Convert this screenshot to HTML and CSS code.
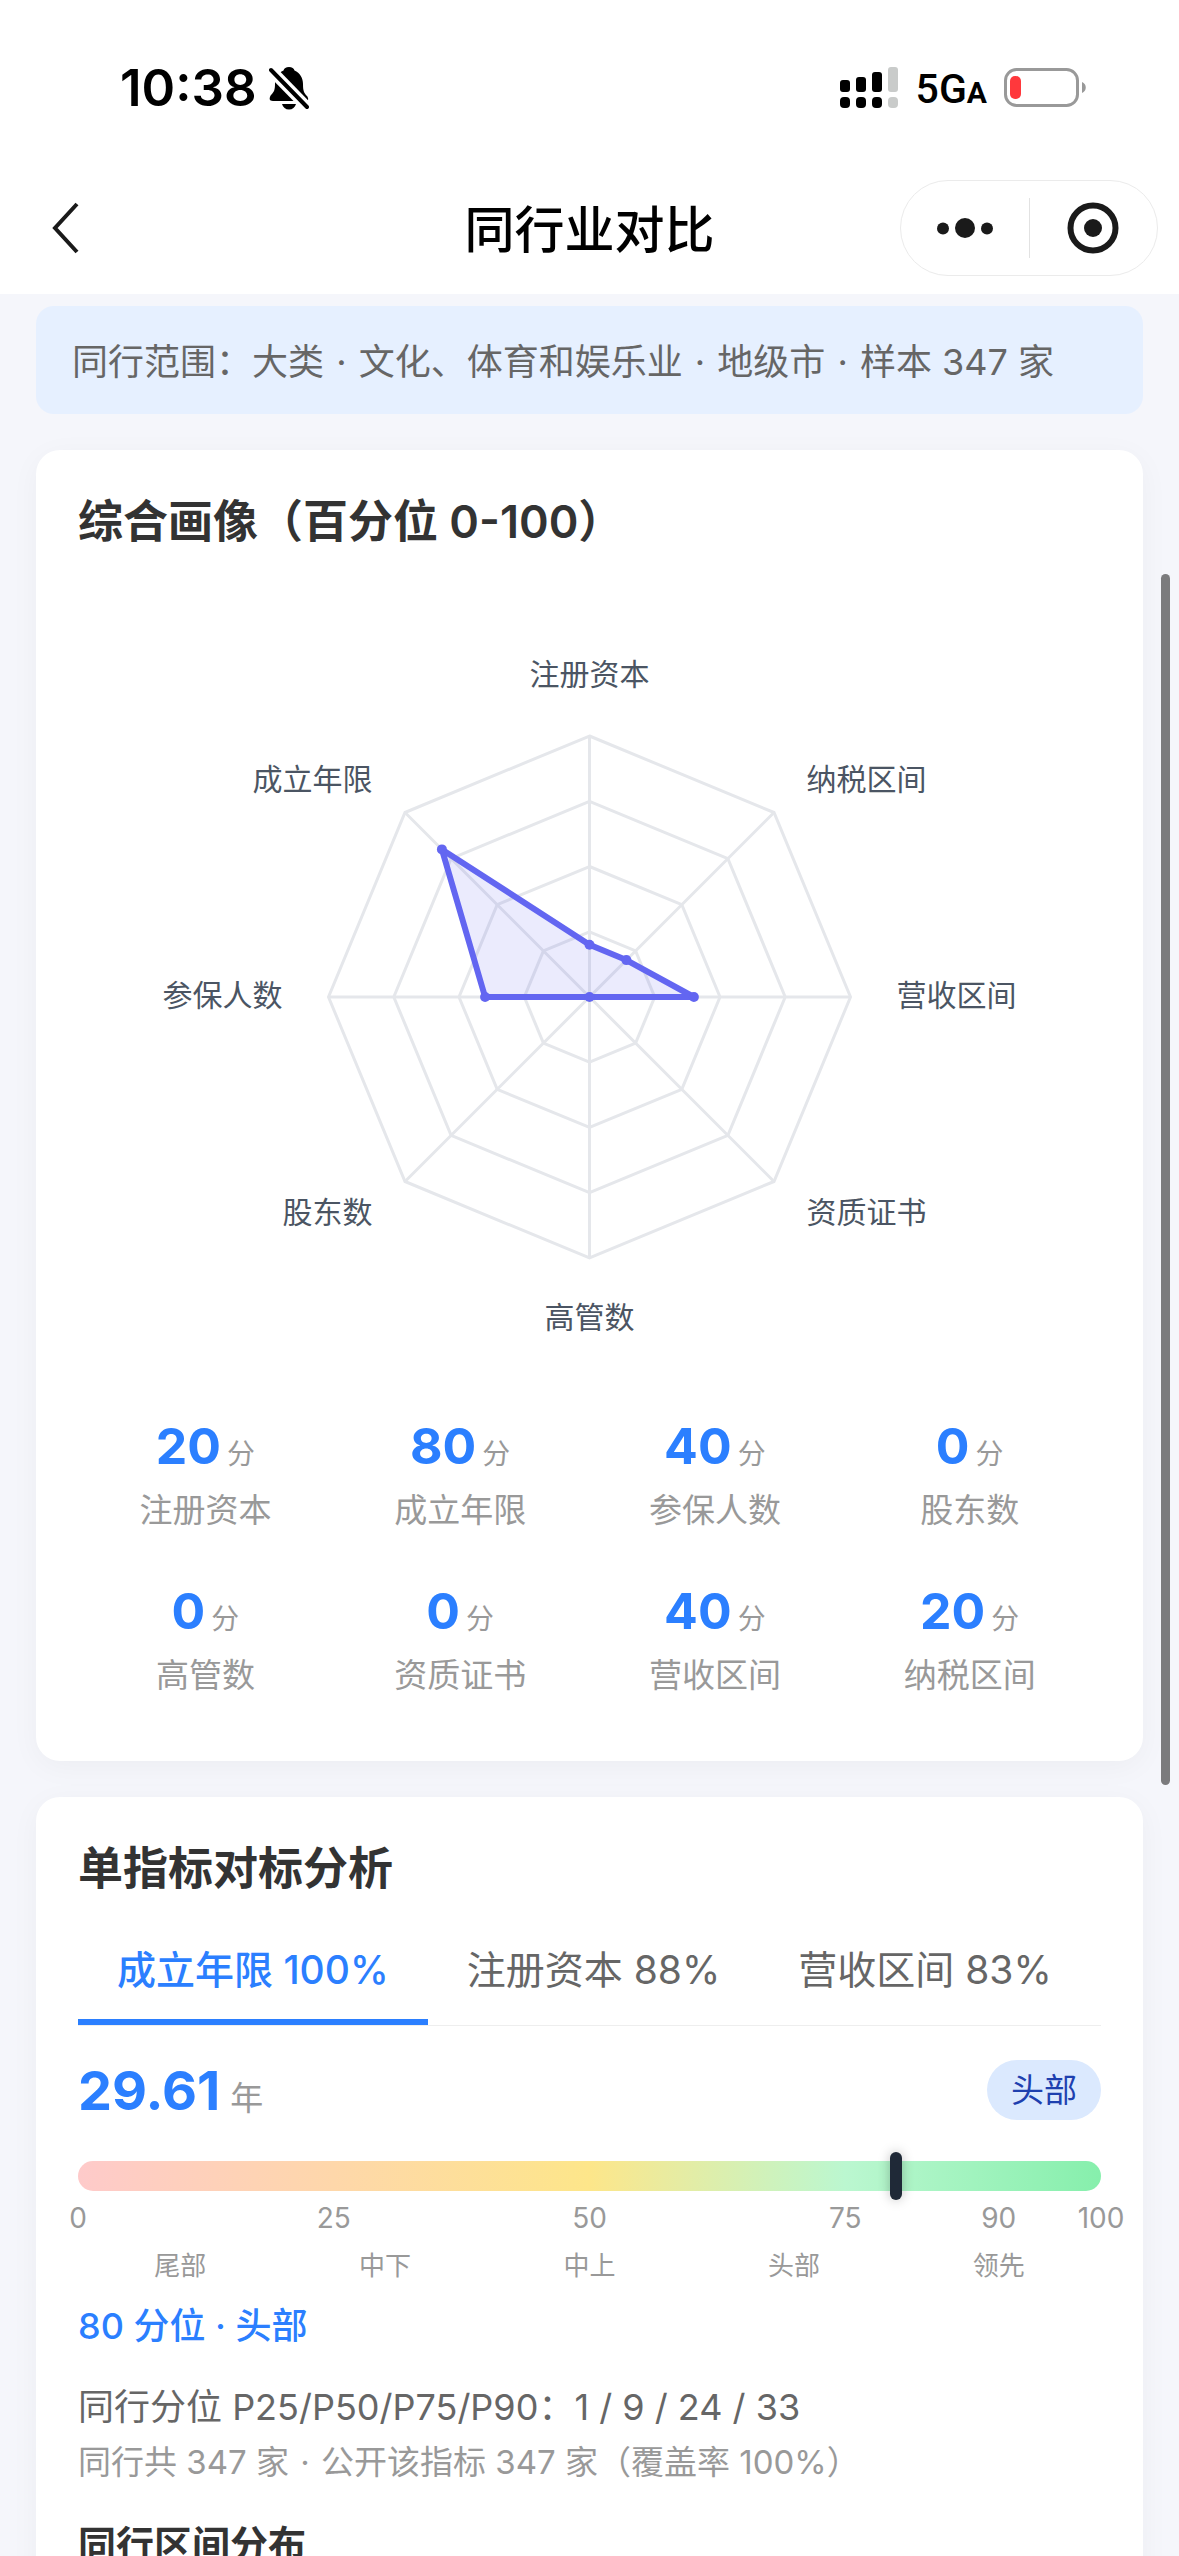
FILE: index.html
```html
<!DOCTYPE html>
<html lang="zh-CN">
<head>
<meta charset="utf-8">
<meta name="viewport" content="width=device-width, initial-scale=1">
<title>同行业对比</title>
<link rel="stylesheet" href="styles.css">
</head>
<body>
<div class="app">
  <header class="header">
    <div class="status">
      <div class="status-side">
        <span class="clock">10:38</span>
        <svg class="bell" width="40" height="44" viewBox="0 0 40 44" aria-label="静音">
          <path d="M20 1c3 0 5 1.500 5.500 3.500C31 7 34 12 34 18c0 7 1 9 4 12 1.500 2 2 5-1 5H4c-4 0-4-3-2-6 3-3 4-5 4-11C6 12 9 7 14.500 4.500 15 2.500 17 1 20 1z"/>
          <path d="M13 38h14c-1 3.500-3.500 5.500-7 5.500S14 41.500 13 38z"/>
          <path class="bell-gap" d="M-1 1l41 42"/>
          <path class="bell-slash" d="M2 4l36 37"/>
        </svg>
      </div>
      <div class="status-side">
        <svg width="58" height="42" viewBox="0 0 58 42" aria-label="信号">
          <rect x="0" y="13" width="10" height="12" rx="3"/><rect x="16" y="10" width="10" height="15" rx="3"/><rect x="32" y="5" width="10" height="20" rx="3"/>
          <rect x="0" y="30" width="10" height="11" rx="4"/><rect x="16" y="30" width="10" height="11" rx="4"/><rect x="32" y="30" width="10" height="11" rx="4"/>
          <g fill="#c9cbca"><rect x="48" y="0" width="10" height="25" rx="3"/><rect x="48" y="30" width="10" height="11" rx="4"/></g>
        </svg>
        <span class="network">5G<span class="network-suffix">A</span></span>
        <svg width="83" height="40" viewBox="0 0 83 40" aria-label="电量低">
          <rect x="1.500" y="1.500" width="72" height="36" rx="11" fill="none" stroke="#999" stroke-width="3"/>
          <rect x="6" y="8" width="11" height="23" rx="5" fill="#ff383c"/>
          <path d="M78 14c5 2 5 9 0 11z" fill="#999"/>
        </svg>
      </div>
    </div>
    <nav class="nav">
      <button class="back" type="button" aria-label="返回">
        <svg width="28" height="52" viewBox="0 0 28 52"><path d="M25 2L3 26l22 24" fill="none" stroke="#1a1a1a" stroke-width="4"/></svg>
      </button>
      <h1 class="nav-title">同行业对比</h1>
      <div class="capsule">
        <button class="capsule-btn" type="button" aria-label="更多">
          <svg width="56" height="20" viewBox="0 0 56 20"><circle cx="6" cy="10.500" r="6"/><circle cx="28" cy="10" r="10"/><circle cx="50" cy="10.500" r="6"/></svg>
        </button>
        <span class="capsule-line"></span>
        <button class="capsule-btn" type="button" aria-label="关闭">
          <svg width="52" height="52" viewBox="0 0 52 52"><circle cx="26" cy="26" r="22.500" fill="none" stroke="#1a1a1a" stroke-width="6"/><circle cx="26" cy="26" r="9"/></svg>
        </button>
      </div>
    </nav>
  </header>

  <main class="content">
    <p class="scope">同行范围：大类 <span class="sep">·</span> 文化、体育和娱乐业 <span class="sep">·</span> 地级市 <span class="sep">·</span> 样本 347 家</p>

    <section class="card">
      <h2 class="card-title">综合画像（百分位 0-100）</h2>
      <svg class="radar" viewBox="0 0 1023 804" role="img" aria-label="综合画像雷达图">
        <g transform="translate(511.5 400)">
          <g class="radar-grid">
            <polygon points="0,-261 184.500,-184.500 261,0 184.500,184.500 0,261 -184.500,184.500 -261,0 -184.500,-184.500"/>
            <polygon points="0,-195.700 138.400,-138.400 195.700,0 138.400,138.400 0,195.700 -138.400,138.400 -195.700,0 -138.400,-138.400"/>
            <polygon points="0,-130.500 92.300,-92.300 130.500,0 92.300,92.300 0,130.500 -92.300,92.300 -130.500,0 -92.300,-92.300"/>
            <polygon points="0,-65.200 46.100,-46.100 65.200,0 46.100,46.100 0,65.200 -46.100,46.100 -65.200,0 -46.100,-46.100"/>
            <path d="M0-261V261M-261 0H261M-184.500-184.500L184.500 184.500M184.500-184.500L-184.500 184.500"/>
          </g>
          <polygon class="radar-area" points="0,-52.200 36.900,-36.900 104.400,0 0,0 -104.400,0 -147.600,-147.600"/>
          <g class="radar-dots">
            <circle cy="-52.200" r="5"/><circle cx="36.900" cy="-36.900" r="5"/><circle cx="104.400" r="5"/><circle r="5"/><circle cx="-104.400" r="5"/><circle cx="-147.600" cy="-147.600" r="5"/>
          </g>
          <g class="radar-labels">
            <text y="-312" text-anchor="middle">注册资本</text>
            <text x="217" y="-207">纳税区间</text>
            <text x="307" y="9">营收区间</text>
            <text x="217" y="226">资质证书</text>
            <text y="331" text-anchor="middle">高管数</text>
            <text x="-217" y="226" text-anchor="end">股东数</text>
            <text x="-307" y="9" text-anchor="end">参保人数</text>
            <text x="-217" y="-207" text-anchor="end">成立年限</text>
          </g>
        </g>
      </svg>
      <dl class="scores">
        <div class="score"><dd class="score-value">20<small>分</small></dd><dt>注册资本</dt></div>
        <div class="score"><dd class="score-value">80<small>分</small></dd><dt>成立年限</dt></div>
        <div class="score"><dd class="score-value">40<small>分</small></dd><dt>参保人数</dt></div>
        <div class="score"><dd class="score-value">0<small>分</small></dd><dt>股东数</dt></div>
        <div class="score"><dd class="score-value">0<small>分</small></dd><dt>高管数</dt></div>
        <div class="score"><dd class="score-value">0<small>分</small></dd><dt>资质证书</dt></div>
        <div class="score"><dd class="score-value">40<small>分</small></dd><dt>营收区间</dt></div>
        <div class="score"><dd class="score-value">20<small>分</small></dd><dt>纳税区间</dt></div>
      </dl>
    </section>

    <section class="card">
      <h2 class="card-title">单指标对标分析</h2>
      <div class="tabs" role="tablist">
        <button class="tab tab-active" type="button" role="tab" aria-selected="true">成立年限 100%</button>
        <button class="tab" type="button" role="tab" aria-selected="false">注册资本 88%</button>
        <button class="tab" type="button" role="tab" aria-selected="false">营收区间 83%</button>
      </div>
      <div class="metric">
        <p class="metric-value">29.61<small>年</small></p>
        <span class="badge">头部</span>
      </div>
      <div class="gauge"><span class="gauge-marker" style="left: 80%"></span></div>
      <div class="ticks"><span>0</span><span>25</span><span>50</span><span>75</span><span>90</span><span>100</span></div>
      <div class="bands"><span>尾部</span><span>中下</span><span>中上</span><span>头部</span><span>领先</span></div>
      <p class="rank">80 分位 · 头部</p>
      <p class="quantiles">同行分位 P25/P50/P75/P90：1 / 9 / 24 / 33</p>
      <p class="coverage">同行共 347 家 <span class="sep">·</span> 公开该指标 347 家（覆盖率 100%）</p>
      <h3 class="sub-title">同行区间分布</h3>
    </section>
  </main>
  <div class="scroll-thumb"></div>
</div>
</body>
</html>
```
FILE: styles.css
```css
* {
  box-sizing: border-box;
  margin: 0;
  padding: 0;
}

body {
  font-family: Inter, "Noto Sans CJK SC", sans-serif;
  color: #333;
  background: #f5f6fb;
}

button {
  font: inherit;
  color: inherit;
  background: none;
  border: 0;
}

svg {
  display: block;
  flex: none;
}

.app {
  position: relative;
  display: flex;
  flex-direction: column;
  height: 100vh;
  overflow: hidden;
}

/* Header */
.header {
  flex: none;
  padding: 58px 21px 18px;
  background: #fff;
  color: #000;
}

.status {
  display: flex;
  justify-content: space-between;
  align-items: center;
  height: 60px;
  padding: 0 71px 0 99px;
}

.status-side {
  display: flex;
  align-items: center;
}

.clock {
  margin-right: 12px;
  font-size: 51px;
  font-weight: 600;
  line-height: 60px;
}

.bell-gap {
  stroke: #fff;
  stroke-width: 11;
}

.bell-slash {
  stroke: #000;
  stroke-width: 4;
  stroke-linecap: round;
}

.network {
  margin: 0 17px 0 18px;
  padding-top: 2px;
  font-family: Roboto, sans-serif;
  font-size: 41px;
  font-weight: 500;
  line-height: 60px;
}

.network-suffix {
  font-size: 30px;
  font-weight: 700;
  line-height: 30px;
}

.nav {
  display: grid;
  grid-template-columns: 1fr auto 1fr;
  align-items: center;
  height: 96px;
  margin-top: 62px;
}

.back {
  justify-self: start;
  padding: 8px 31px;
}

.nav-title {
  padding-top: 4px;
  font-size: 50px;
  font-weight: 500;
  line-height: 60px;
}

.capsule {
  justify-self: end;
  display: flex;
  align-items: center;
  width: 258px;
  height: 96px;
  border: 1px solid #ebebeb;
  border-radius: 48px;
}

.capsule-btn {
  flex: 1;
  display: flex;
  justify-content: center;
  fill: #1a1a1a;
}

.capsule-line {
  width: 1px;
  height: 60px;
  background: #e2e2e2;
}

/* Page content */
.content {
  flex: 1;
  display: flex;
  flex-direction: column;
  gap: 36px;
  min-height: 0;
  padding: 12px 36px 36px;
  overflow-y: auto;
  scrollbar-width: none;
}

.scope {
  flex: none;
  padding: 32px 36px 28px;
  border-radius: 18px;
  background: #e6f0ff;
  color: #666;
  font-size: 36px;
  line-height: 48px;
}

.sep {
  margin: 0 2px;
}

.card {
  flex: none;
  padding: 42px;
  border-radius: 24px;
  background: #fff;
  box-shadow: 0 6px 30px rgba(0, 0, 0, 0.04);
}

.card-title {
  font-size: 45px;
  font-weight: 600;
  line-height: 60px;
}

/* Radar chart */
.radar {
  width: 100%;
  height: auto;
  margin-top: 45px;
}

.radar-grid {
  fill: none;
  stroke: #e5e7eb;
  stroke-width: 3;
}

.radar-area {
  fill: rgba(99, 102, 241, 0.13);
  stroke: #6366f1;
  stroke-width: 6;
  stroke-linejoin: round;
}

.radar-dots {
  fill: #6366f1;
}

.radar-labels {
  fill: #4b5563;
  font-size: 30px;
}

/* Scores */
.scores {
  display: grid;
  grid-template-columns: repeat(4, 1fr);
  row-gap: 51px;
  margin-top: 15px;
  padding: 0 4px 24px 0;
}

.score {
  display: flex;
  flex-direction: column;
  align-items: center;
  gap: 14px;
  color: #999;
  font-size: 33px;
  line-height: 40px;
}

.score-value {
  color: #2b7fff;
  font-size: 50px;
  font-weight: 700;
  line-height: 60px;
}

.score-value small {
  margin-left: 6px;
  color: #999;
  font-size: 28px;
  font-weight: 400;
  line-height: 28px;
}

/* Single metric */
.tabs {
  display: flex;
  margin-top: 21px;
  border-bottom: 1px solid #eee;
}

.tab {
  padding: 24px 39px 23px;
  border-bottom: 6px solid transparent;
  color: #666;
  font-size: 39px;
  line-height: 52px;
  white-space: nowrap;
}

.tab-active {
  border-bottom-color: #2b7fff;
  color: #2b7fff;
  font-weight: 500;
}

.metric {
  display: flex;
  justify-content: space-between;
  align-items: center;
  margin-top: 34px;
}

.metric-value {
  padding-top: 2px;
  color: #2b7fff;
  font-size: 54px;
  font-weight: 700;
  line-height: 58px;
}

.metric-value small {
  margin-left: 10px;
  color: #999;
  font-size: 33px;
  font-weight: 400;
  line-height: 33px;
}

.badge {
  padding: 0 24px;
  border-radius: 30px;
  background: #dbe9fe;
  color: #1e40af;
  font-size: 33px;
  line-height: 60px;
}

.gauge {
  position: relative;
  height: 30px;
  margin-top: 41px;
  border-radius: 15px;
  background: linear-gradient(90deg, #fecaca 0%, #fed7aa 25%, #fde68a 50%, #bbf7d0 75%, #86efac 100%);
}

.gauge-marker {
  position: absolute;
  top: -9px;
  width: 12px;
  height: 48px;
  margin-left: -6px;
  border-radius: 6px;
  background: #1f2937;
  box-shadow: 0 0 12px rgba(0, 0, 0, 0.25);
}

.ticks {
  display: grid;
  grid-template-columns: 25fr 25fr 25fr 15fr 10fr 0;
  margin-top: 9px;
  color: #999;
  font-size: 28px;
  line-height: 36px;
}

.ticks span {
  display: flex;
  justify-content: center;
  width: 0;
}

.bands {
  display: grid;
  grid-template-columns: repeat(5, 1fr);
  margin-top: 12px;
  color: #999;
  font-size: 26px;
  line-height: 36px;
  text-align: center;
}

.rank {
  margin-top: 18px;
  color: #2b7fff;
  font-size: 36px;
  font-weight: 500;
  line-height: 48px;
}

.quantiles {
  margin-top: 33px;
  color: #666;
  font-size: 36px;
  line-height: 48px;
}

.coverage {
  margin-top: 9px;
  color: #999;
  font-size: 33px;
  line-height: 44px;
}

.sub-title {
  margin-top: 34px;
  font-size: 38px;
  font-weight: 600;
  line-height: 52px;
}

/* Scroll position indicator, floats over the page edge */
.scroll-thumb {
  position: absolute;
  top: 574px;
  right: 9px;
  width: 9px;
  height: 1211px;
  border-radius: 5px;
  background: #7b7b7d;
}
```
